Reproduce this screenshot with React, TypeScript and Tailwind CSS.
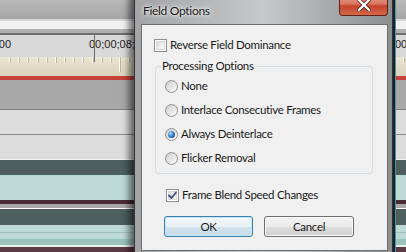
import React from 'react';

const ui = "font-['Lato','Noto_Sans',sans-serif] text-[11.5px] tracking-[-0.3px] text-[#1a1a1a]";

function CheckBox({ checked }: { checked?: boolean }) {
  return (
    <span className="relative w-[13px] h-[13px] shrink-0 border border-[#8e8f8f] bg-white p-px">
      <span className="block w-full h-full border border-[#d8d8d8] bg-gradient-to-br from-[#dedede] to-[#fbfbfb]" />
      {checked && (
        <svg className="absolute left-0 top-0" width="11" height="11" viewBox="0 0 11 11">
          <path d="M2 5.5 L4.5 8 L9 2.5" fill="none" stroke="#3d5283" strokeWidth="1.8" strokeLinecap="round" strokeLinejoin="round" />
        </svg>
      )}
    </span>
  );
}

function Radio({ checked }: { checked?: boolean }) {
  return (
    <span className="w-[13px] h-[13px] shrink-0 rounded-full border border-[#8e8f8f] bg-gradient-to-br from-[#cfcfcf] to-[#fbfbfb] flex items-center justify-center">
      {checked && (
        <span className="w-[7px] h-[7px] rounded-full bg-[radial-gradient(circle_at_35%_35%,#a6dcff,#2a6fc0_55%,#0f3f7e)]" />
      )}
    </span>
  );
}

const ticks = Array.from({ length: 44 }, (_, i) => 9 + i * 9.17);

function Timeline() {
  return (
    <div className="flex flex-col w-full">
      <div className="h-[19px] bg-gradient-to-b from-[#b9b9b9] to-[#a6a6a6]" />
      <div className="h-[2px] bg-[#d6d6d6]" />
      <div className="h-[8px] bg-[#f2f2f2]" />
      <div className="h-[4px] bg-[#b0b0b0]" />
      <div className="h-[2px] bg-[#6e6e6e]" />
      <div className="relative h-[22px] bg-[#d9d9d9] font-['Liberation_Sans',Arial,sans-serif] text-[11px] leading-[12px] text-[#1c1c1c]">
        <span className="absolute left-[-47px] top-[3px]">00;00;00;00</span>
        <span className="absolute left-[89px] top-[3px]">00;00;08;00</span>
        <span className="absolute left-[395px] top-[3px]">00;00;16;00</span>
        <span className="absolute left-[94px] top-0 w-px h-[27px] bg-[#6c6c6c]" />
      </div>
      <div className="h-[15px] bg-[linear-gradient(#e9e5d3,#ddd6bf)]">
        <svg width="406" height="15" className="block">
          {ticks.map((x, i) => (
            <g key={i}>
              <rect x={Math.round(x)} y="0" width="1" height={i === 12 ? 15 : 6} fill="#fcfbf5" />
              <rect x={Math.round(x) + 1} y="0" width="1" height={i === 12 ? 15 : 6} fill="#bdb7a4" />
            </g>
          ))}
        </svg>
      </div>
      <div className="h-[4px] bg-[#dcd5c0]" />
      <div className="h-[4px] bg-[#c6423a]" />
      <div className="h-[29px] bg-[#a8a8a8]" />
      <div className="h-px bg-[#808080]" />
      <div className="h-[24px] bg-[#dcdcdc]" />
      <div className="h-px bg-[#8a8a8a]" />
      <div className="h-[24px] bg-[#dcdcdc]" />
      <div className="h-px bg-[#f4f4f4]" />
      <div className="h-[15px] bg-[#4d605e]" />
      <div className="h-[25px] bg-[#bedad5]" />
      <div className="h-[4px] bg-[#4b2b34]" />
      <div className="h-[4px] bg-[#a8a8a8]" />
      <div className="h-px bg-white" />
      <div className="h-[16px] bg-[#4d605e]" />
      <div className="h-[7px] bg-[#bedad5]" />
      <div className="h-px bg-[#9fc0bb]" />
      <div className="h-[6px] bg-[#bedad5]" />
      <div className="h-[6px] bg-[#9cc4be]" />
      <div className="h-[2px] bg-[#e8f0ee]" />
      <div className="h-[8px] bg-[#5a3a44]" />
    </div>
  );
}

function FieldOptions() {
  return (
    <div className="absolute left-[134px] top-[-6px] w-[259px] h-[272px] border border-[#333] bg-gradient-to-r from-[#a2a4a6] via-[#c6c8c9] to-[#8c8e90] pl-[6px] pr-[4px] shadow-[-5px_0_7px_rgba(0,0,0,0.55),2px_0_0_#222,3px_0_0_#3aa0b0]">
      {/* title bar */}
      <div className="h-[29px] flex items-start justify-between">
        <span className={`${ui} text-[12px] mt-[8px] ml-[2px] leading-[16px] [text-shadow:0_0_6px_#fff,0_0_3px_#fff]`}>Field Options</span>
        <button className="w-[49px] h-[21px] rounded-b-[4px] border border-t-0 border-[#5e2218] bg-[linear-gradient(#e6a495,#d77660_45%,#c4442d_55%,#d4684a)] flex items-center justify-center">
          <svg width="14" height="12" viewBox="0 0 14 12">
            <path d="M2 1 L12 11 M12 1 L2 11" stroke="#5a1d14" strokeWidth="4" strokeLinecap="square" />
            <path d="M2 1 L12 11 M12 1 L2 11" stroke="#fff" strokeWidth="2.4" strokeLinecap="square" />
          </svg>
        </button>
      </div>
      {/* client area */}
      <div className={`${ui} w-[247px] h-[227px] border border-[#6f6f6f] bg-[#f0f0f0] flex flex-col pt-[12px]`}>
        <label className="ml-[12px] h-4 flex items-center gap-[3px]">
          <CheckBox />
          <span>Reverse Field Dominance</span>
        </label>
        <fieldset className="ml-[13px] mt-[5px] w-[218px] border border-[#d5dfe5] rounded-[3px] pl-[5px] pt-1 pb-[7px]">
          <legend className="px-px leading-4">Processing Options</legend>
          <div className="ml-[4px] flex flex-col gap-2">
            <label className="h-4 flex items-center gap-[3px]"><Radio /><span>None</span></label>
            <label className="h-4 flex items-center gap-[3px]"><Radio /><span>Interlace Consecutive Frames</span></label>
            <label className="h-4 flex items-center gap-[3px]"><Radio checked /><span>Always Deinterlace</span></label>
            <label className="h-4 flex items-center gap-[3px]"><Radio /><span>Flicker Removal</span></label>
          </div>
        </fieldset>
        <label className="ml-[24px] mt-[13px] h-4 flex items-center gap-[3px]">
          <CheckBox checked />
          <span>Frame Blend Speed Changes</span>
        </label>
        <div className="ml-[22px] mt-[13px] flex gap-[11px]">
          <button className="w-[89px] h-[21px] rounded-[3px] border border-[#3c7fb1] bg-[linear-gradient(#f3f8fb,#e6f0f6_50%,#d3e4ee_51%,#c8dbe7)] shadow-[inset_0_0_0_1px_#bfe7f8]">OK</button>
          <button className="w-[90px] h-[21px] rounded-[3px] border border-[#707070] bg-[linear-gradient(#f2f2f2,#ebebeb_50%,#dddddd_51%,#cfcfcf)] shadow-[inset_0_0_0_1px_#fafafa]">Cancel</button>
        </div>
      </div>
    </div>
  );
}

export default function App() {
  return (
    <div className="relative w-[406px] h-[252px] overflow-hidden bg-[#a8a8a8]">
      <Timeline />
      <FieldOptions />
    </div>
  );
}
